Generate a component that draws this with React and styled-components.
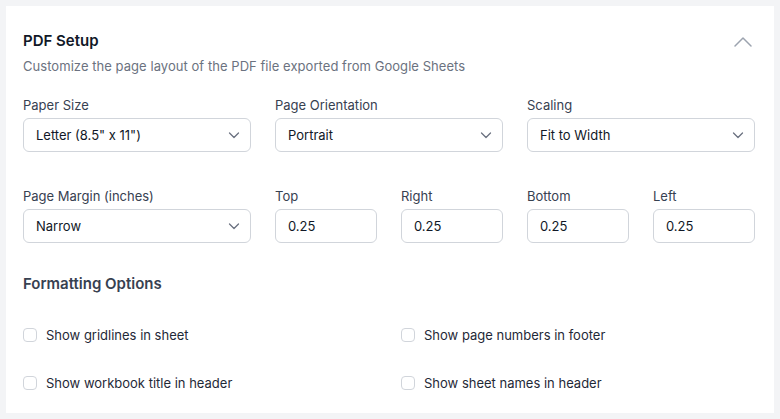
import React from "react";
import styled, { createGlobalStyle } from "styled-components";

const GlobalStyle = createGlobalStyle`
  * { box-sizing: border-box; }
  body {
    margin: 0;
    padding: 6px;
    background: #f3f4f6;
    font-family: Inter, "Noto Sans", sans-serif;
    -webkit-font-smoothing: antialiased;
  }
`;

/* ================= STYLES ================= */
const Card = styled.section`
  background: #ffffff;
  padding: 25px 19px 20px 17px;
  height: 407px;
`;

const HeaderRow = styled.div`
  display: flex;
  justify-content: space-between;
  align-items: center;
  height: 20px;
`;

const Title = styled.h2`
  margin: 0;
  font-size: 15px;
  line-height: 20px;
  font-weight: 600;
  color: #111827;
`;

const CollapseBtn = styled.button`
  border: none;
  background: none;
  padding: 0;
  display: flex;
  cursor: pointer;
  color: #9ca3af;
`;

const Subtitle = styled.p`
  margin: 6px 0 0;
  font-size: 13px;
  line-height: 18px;
  letter-spacing: 0.05px;
  color: #6b7280;
`;

const FieldGrid = styled.div`
  display: grid;
  grid-template-columns: repeat(3, 1fr);
  gap: 35px 24px;
  margin-top: 21px;
`;

const MarginGrid = styled.div`
  grid-column: span 2;
  display: grid;
  grid-template-columns: repeat(4, 1fr);
  gap: 24px;
`;

const Field = styled.label`
  display: flex;
  flex-direction: column;
  gap: 4px;
`;

const Label = styled.span`
  font-size: 13px;
  line-height: 18px;
  color: #374151;
`;

const SelectBox = styled.div`
  height: 34px;
  display: flex;
  align-items: center;
  justify-content: space-between;
  padding: 0 10px 0 12px;
  border: 1px solid #d1d5db;
  border-radius: 6px;
  background: #fff;
  font-size: 13px;
  color: #111827;
  cursor: pointer;
  svg { color: #6b7280; }
`;

const TextInput = styled.input`
  width: 100%;
  height: 34px;
  padding: 0 12px;
  border: 1px solid #d1d5db;
  border-radius: 6px;
  font-family: inherit;
  font-size: 13px;
  color: #111827;
  outline: none;
  &:focus { border-color: #6366f1; }
`;

const SectionTitle = styled.h3`
  margin: 31px 0 0;
  font-size: 15px;
  line-height: 20px;
  font-weight: 600;
  color: #374151;
`;

const OptionsGrid = styled.div`
  display: grid;
  grid-template-columns: repeat(2, 1fr);
  gap: 28px 24px;
  margin-top: 31px;
`;

const Option = styled.label`
  display: flex;
  align-items: center;
  gap: 9px;
  height: 20px;
  font-size: 13px;
  color: #1f2937;
  cursor: pointer;
`;

const Check = styled.input`
  appearance: none;
  margin: 0;
  width: 14px;
  height: 14px;
  border: 1px solid #d1d5db;
  border-radius: 4px;
  background: #fff;
  cursor: pointer;
  &:checked { background: #4f46e5; border-color: #4f46e5; }
`;

/* ================= ICONS ================= */
const ChevronUp = () => (
  <svg width="24" height="20" viewBox="0 1 24 20" fill="none" stroke="currentColor"
    strokeWidth="1.5" strokeLinecap="round" strokeLinejoin="round">
    <path d="M4 16 L12 8 L20 16" />
  </svg>
);

const ChevronDown = () => (
  <svg width="12" height="8" viewBox="0 0 12 8" fill="none" stroke="currentColor"
    strokeWidth="1.3" strokeLinecap="round" strokeLinejoin="round">
    <path d="M1.5 2 L6 6.5 L10.5 2" />
  </svg>
);

/* ================= COMPONENT ================= */
const selects = [
  { label: "Paper Size", value: "Letter (8.5\" x 11\")" },
  { label: "Page Orientation", value: "Portrait" },
  { label: "Scaling", value: "Fit to Width" },
];

const margins = ["Top", "Right", "Bottom", "Left"];

const options = [
  "Show gridlines in sheet",
  "Show page numbers in footer",
  "Show workbook title in header",
  "Show sheet names in header",
];

export default function App() {
  return (
    <>
      <GlobalStyle />
      <Card>
        <HeaderRow>
          <Title>PDF Setup</Title>
          <CollapseBtn aria-label="Collapse">
            <ChevronUp />
          </CollapseBtn>
        </HeaderRow>
        <Subtitle>Customize the page layout of the PDF file exported from Google Sheets</Subtitle>

        <FieldGrid>
          {selects.map(s => (
            <Field key={s.label}>
              <Label>{s.label}</Label>
              <SelectBox>
                {s.value}
                <ChevronDown />
              </SelectBox>
            </Field>
          ))}
          <Field>
            <Label>Page Margin (inches)</Label>
            <SelectBox>
              Narrow
              <ChevronDown />
            </SelectBox>
          </Field>
          <MarginGrid>
            {margins.map(m => (
              <Field key={m}>
                <Label>{m}</Label>
                <TextInput defaultValue="0.25" />
              </Field>
            ))}
          </MarginGrid>
        </FieldGrid>

        <SectionTitle>Formatting Options</SectionTitle>
        <OptionsGrid>
          {options.map(o => (
            <Option key={o}>
              <Check type="checkbox" />
              {o}
            </Option>
          ))}
        </OptionsGrid>
      </Card>
    </>
  );
}
